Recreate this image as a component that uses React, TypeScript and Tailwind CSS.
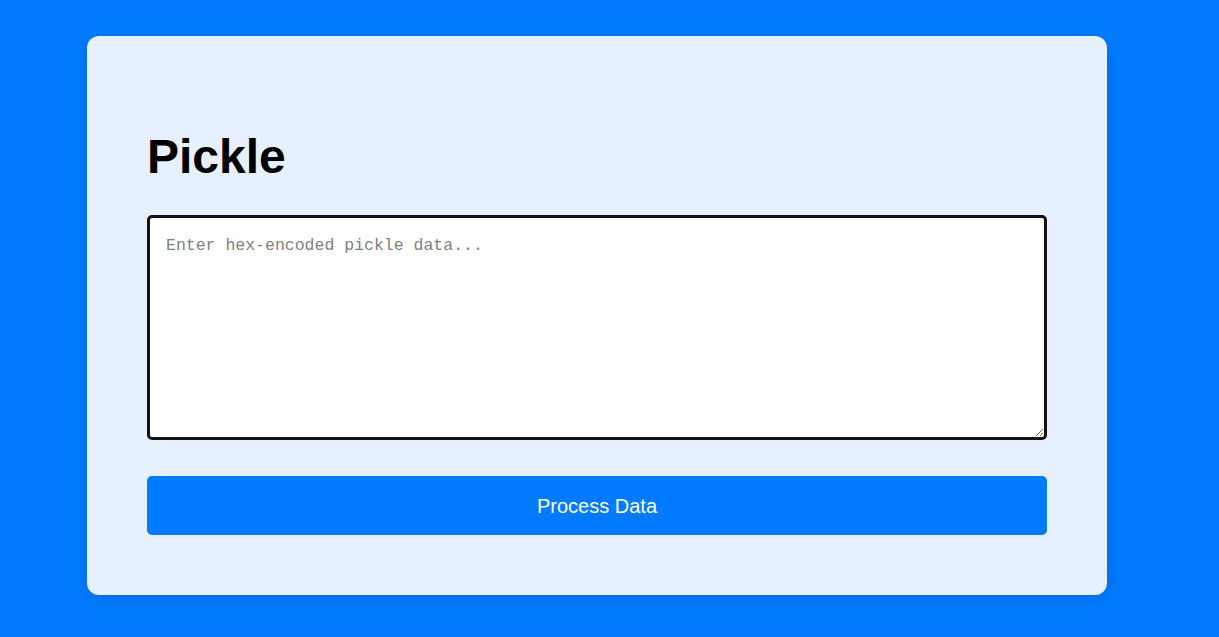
import React from 'react';

const App: React.FC = () => {
  return (
    <div className="min-h-screen w-full bg-[#007bff] pl-[87px] pt-[36px] pb-[42px] font-['Liberation_Sans',Arial,sans-serif]">
      {/* Card */}
      <div className="w-[1020px] rounded-[12px] bg-[#e6f0ff] px-[60px] pt-[60px] pb-[60px] shadow-[0_4px_20px_rgba(0,0,0,0.12)]">
        <h1 className="mt-[33px] mb-[31px] text-[48px] leading-[55px] font-bold text-black">Pickle</h1>

        <textarea
          autoFocus
          placeholder="Enter hex-encoded pickle data..."
          className="block h-[225px] w-[900px] rounded-[5px] border-[3px] border-[#111] bg-white px-[16px] py-[17px] font-['Liberation_Mono','Courier_New',monospace] text-[16.5px] leading-[22px] text-black outline-none placeholder:text-[#808080]"
        />

        <button className="mt-[36px] block h-[59px] w-[900px] rounded-[5px] bg-[#007bff] text-[20px] text-white">
          Process Data
        </button>
      </div>
    </div>
  );
};

export default App;
